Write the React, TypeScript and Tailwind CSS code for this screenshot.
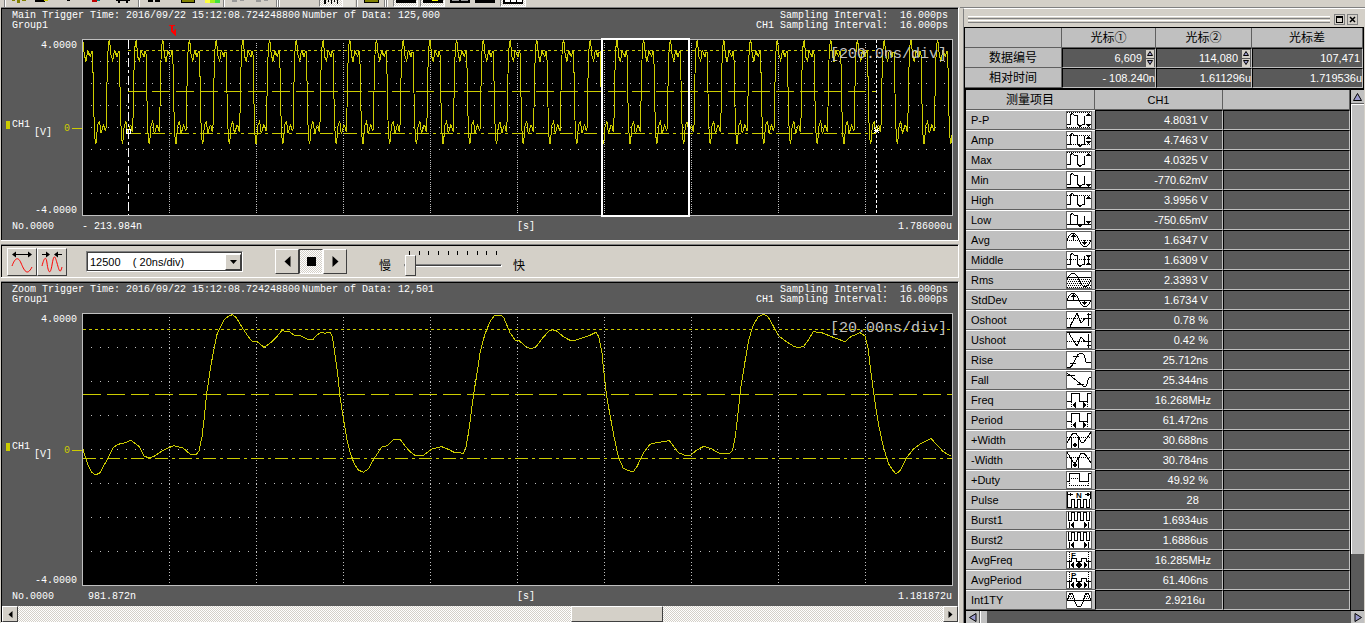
import React from 'react'

type Point = [number, number]

// Sampled trace, three units per pixel, zero volts at y = 448
const SAMPLES: Point[] = [
  [249, 448], [262, 490], [275, 517], [287, 525], [300, 518], [318, 485], [340, 442], [355, 433], [375, 428], [392, 421],
  [405, 430], [418, 440], [432, 468], [445, 473], [460, 470], [490, 451], [520, 437], [548, 443], [570, 462], [588, 464],
  [597, 452], [606, 410], [612, 360], [620, 280], [632, 200], [644, 135], [652, 100], [662, 80], [672, 60], [685, 49],
  [697, 44], [708, 52], [725, 80], [740, 103], [755, 123], [772, 125], [792, 142], [810, 130], [830, 110], [845, 92],
  [868, 95], [885, 108], [902, 107], [920, 117], [940, 117], [950, 106], [962, 97], [975, 100], [990, 97], [997, 110],
  [1006, 170], [1014, 230], [1020, 290], [1030, 355], [1040, 415], [1050, 455], [1062, 490], [1075, 510], [1090, 517],
  [1105, 507], [1120, 480], [1145, 441], [1162, 437], [1180, 420], [1200, 418], [1215, 437], [1228, 453], [1245, 466],
  [1270, 466], [1295, 447], [1325, 440], [1345, 448], [1362, 457], [1378, 457], [1390, 461], [1398, 440], [1406, 395],
  [1414, 335], [1422, 275], [1432, 215], [1440, 160], [1447, 130], [1456, 100], [1470, 65], [1482, 48], [1490, 45],
  [1503, 45], [1512, 55], [1530, 98], [1545, 120], [1558, 122], [1575, 138], [1592, 147], [1608, 140], [1630, 112],
  [1648, 92], [1658, 89], [1672, 94], [1690, 110], [1710, 121], [1728, 120], [1745, 114], [1770, 106], [1788, 97],
  [1796, 110], [1806, 160], [1812, 220], [1820, 290], [1830, 345], [1842, 410], [1855, 470], [1870, 505], [1885, 512],
  [1900, 515], [1912, 498], [1930, 460], [1950, 433], [1970, 428], [1990, 425], [2008, 422], [2022, 440], [2035, 458],
  [2055, 466], [2072, 466], [2090, 450], [2112, 439], [2135, 447], [2158, 460], [2190, 460], [2198, 450], [2206, 410],
  [2214, 340], [2222, 265], [2234, 190], [2246, 120], [2260, 75], [2275, 50], [2290, 43], [2304, 50], [2318, 75],
  [2335, 107], [2355, 122], [2380, 138], [2395, 143], [2412, 138], [2425, 120], [2440, 95], [2465, 98], [2495, 110],
  [2535, 125], [2552, 110], [2580, 98], [2595, 108], [2604, 145], [2614, 225], [2624, 300], [2635, 370], [2650, 440],
  [2665, 490], [2678, 510], [2688, 522], [2702, 510], [2722, 470], [2740, 448], [2760, 432], [2775, 425], [2793, 415],
  [2808, 432], [2830, 455], [2852, 468],
]

const toPath = (points: Point[]) => 'M' + points.map(([x, y]) => `${x.toFixed(1)} ${y.toFixed(1)}`).join('L')

const zoomPath = toPath(SAMPLES.map(([x, y]) => [(x - 246) / 3, (y - 39) / 3]))

// One burst period repeated over the whole record
const PERIOD = SAMPLES.slice(3, 58)
const mainPath = toPath(
  Array.from({ length: 34 }, (_, i) => i - 20)
    .flatMap((n) => PERIOD.map(([x, y]): Point => [520 + (x - 246) / 30 + n * 26.72, 88.5 + (y - 448) * 0.2157]))
    .filter(([x]) => x > 0 && x < 870),
)

const GRID = [1, 2, 3, 4, 5, 6, 7, 8, 9]

interface PlotProps {
  height: number
  pitch: number
  path: string
  high: number
  middle: number
  low: number
  from?: number
  to?: number
  children?: React.ReactNode
}

const Plot: React.FC<PlotProps> = ({ height, pitch, path, high, middle, low, from = 1, to = 870, children }) => (
  <svg
    viewBox={`0 0 871 ${height}`}
    preserveAspectRatio="none"
    className="block w-full overflow-visible bg-black"
    height={height}
    fill="none"
    shapeRendering="crispEdges"
  >
    <g stroke="#c0c0c0">
      {GRID.map((n) => (
        <path key={n} d={`M${n * 87 + 0.5} 4V${height - 1}`} strokeDasharray={`1 ${pitch - 1}`} />
      ))}
      {[1, 2, 3, 4, 5, 6, 7].map((n) => (
        <path
          key={n}
          d={`M9 ${Math.round((n * (height - 1)) / 8) + 0.5}H866`}
          strokeDasharray="1 7.7"
        />
      ))}
    </g>
    <g stroke="#cccc00">
      <path d={`M${from} ${high}H${to}`} strokeDasharray="3 3" />
      <path d={`M${from} ${middle}H${to}`} strokeDasharray="18 6" />
      <path d={`M${from} ${low}H${to}`} strokeDasharray="13 4 3 4" />
      <path d={path} />
    </g>
    <path d={`M.5 .5H870.5V${height - 0.5}H.5Z`} stroke="#c0c0c0" />
    {children}
  </svg>
)

interface ScopePanelProps {
  title: string
  count: string
  scale: string
  start: string
  end: string
  mark?: React.ReactNode
  footer?: React.ReactNode
  children: React.ReactNode
}

const ScopePanel: React.FC<ScopePanelProps> = ({ title, count, scale, start, end, mark, footer, children }) => (
  <section className="border-t border-r border-b border-t-[#808080] border-r-white border-b-white">
    <div className="border-t border-l border-black bg-[#5a5a5a] font-['Liberation_Mono',monospace] text-[10px] leading-[10px] text-white">
      <header className="flex justify-between pt-[2px] pr-[10px] pb-2 pl-[10px] whitespace-pre">
        <div>
          <p>{title} Trigger Time: 2016/09/22 15:12:08.724248800 <span className="-ml-1">Number of Data: {count}</span></p>
          <p>Group1</p>
        </div>
        <div className="text-right">
          <p>Sampling Interval:  16.000ps</p>
          <p>CH1 Sampling Interval:  16.000ps</p>
        </div>
      </header>
      <div className="flex pr-[5px]">
        <div className="flex w-20 shrink-0 flex-col justify-between">
          <p className="pt-[2px] pr-[5px] text-right">4.0000</p>
          <div className="flex items-center pl-1">
            <span className="mr-[2px] mb-2 h-2 w-1 bg-[#cccc00]" />
            <span className="mb-2">CH1</span>
            <span className="mt-2 ml-[4px]">[V]</span>
            <span className="ml-3 text-[#cccc00]">0</span>
            <span className="ml-[2px] h-px flex-1 bg-[#cccc00]" />
          </div>
          <p className="pr-[5px] text-right">-4.0000</p>
        </div>
        <div className="relative min-w-0 flex-1">
          {children}
          {mark}
          <p className="absolute top-[8px] right-[6px] text-[15px] leading-4 text-[#c0c0c0]">{scale}</p>
        </div>
      </div>
      <div className="flex h-5 items-center pt-[2px] pr-[6px] pl-[10px] whitespace-pre">
        <span className="w-[70px]">No.0000</span>
        <div className="flex flex-1">
          <span className="w-1/2">{start}</span>
          <span>[s]</span>
          <span className="flex-1 text-right">{end}</span>
        </div>
      </div>
      {footer}
    </div>
  </section>
)

const raised = 'border border-t-white border-l-white border-r-[#404040] border-b-[#404040] bg-[#d4d0c8]'
const checker = 'bg-[conic-gradient(#fff_25%,#d4d0c8_0_50%,#fff_0_75%,#d4d0c8_0)] [background-size:2px_2px]'

const Arrow = ({ d }: { d: string }) => (
  <svg width="11" height="11" viewBox="0 0 11 11" className="block shrink-0">
    <path d={d} />
  </svg>
)

const TimeScrollbar = () => (
  <div className={`flex h-4 ${checker}`}>
    <button aria-label="Scroll left" className={`flex w-4 items-center justify-center ${raised}`}>
      <Arrow d="M7.500 2v7L3.500 5.500z" />
    </button>
    <div className="flex-[553]" />
    <div className={`w-[92px] ${raised}`} />
    <div className="flex-[280]" />
    <button aria-label="Scroll right" className={`flex w-[15px] items-center justify-center ${raised}`}>
      <Arrow d="M3.500 2v7L7.500 5.500z" />
    </button>
  </div>
)

const TOOLS: { w: string; kind?: 'sep' | 'pressed'; icon?: React.ReactNode }[] = [
  { w: 'ml-1 w-[2px]', kind: 'sep' },
  { w: 'w-[26px]', icon: <path d="M0 0h3v1h-3zM5 0h3v3h-3zM10 0h4v1h-4z" fill="#808000" /> },
  { w: 'w-[20px]', icon: <><path d="M0 0h10v2h-10z" /><path d="M9 0h4v1h-4z" fill="#cccc00" /></> },
  { w: 'w-[32px]', icon: <path d="M6 0h3v1h-3z" /> },
  { w: 'w-[24px]', icon: <><path d="M3 0h5v2h-5z" fill="#c00000" /><path d="M8 0h3v1h-3z" fill="#008080" /></> },
  { w: 'w-[30px]', icon: <path d="M0 0h14v1h-14zM2 1h2v2h-2zM10 1h2v2h-2z" /> },
  { w: 'w-[2px]', kind: 'sep' },
  { w: 'w-[28px]', icon: <path d="M1 0h5v2h-5zM8 0h5v2h-5z" /> },
  { w: 'ml-2 w-[24px]', icon: <path d="M.5 -2h13v4h-13z" fill="#808000" stroke="#000" /> },
  { w: 'w-[23px]', icon: <><path d="M0 0h5v3h-5z" fill="#ffff40" /><path d="M5 0h5v3h-5z" fill="#a0f020" /><path d="M10 0h5v3h-5z" fill="#40e040" /></> },
  { w: 'w-[2px]', kind: 'sep' },
  { w: 'w-[28px]', icon: <path d="M0 0h5v2h-5zM8 0h4v1h-4z" fill="#999" /> },
  { w: 'w-[20px]', icon: <path d="M0 0h5v2h-5zM8 0h4v1h-4z" fill="#999" /> },
  { w: 'ml-[3px] w-[2px]', kind: 'sep' },
  { w: 'w-[2px]', kind: 'sep' },
  { w: 'ml-[39px] w-[24px]', kind: 'pressed', icon: <path d="M0 0h2v4h-2zM4 0h1v2h-1zM7 0h1v4h-1zM10 0h1v2h-1zM13 0h1v4h-1z" /> },
  { w: 'w-[12px] bg-[#e4e2dc]' },
  { w: 'ml-[1px] w-[2px]', kind: 'sep' },
  { w: 'w-[26px]', icon: <path d="M.5 -2h14v4h-14z" fill="#808000" stroke="#000" /> },
  { w: 'w-[2px]', kind: 'sep' },
  { w: 'w-[2px]', kind: 'sep' },
  { w: 'ml-[5px] w-[25px]', kind: 'pressed', icon: <path d="M-3 0h20v3h-20z" /> },
  { w: 'ml-[2px] w-[25px]', kind: 'pressed', icon: <><path d="M-3 0h20v3h-20z" /><path d="M6 0h6v1h-6z" fill="#ff0" /></> },
  { w: 'ml-[2px] w-[25px]', icon: <><path d="M-3 0h20v3h-20z" /><path d="M-1 0h7v1h-7zM8 0h7v1h-7z" fill="#999" /></> },
  { w: 'w-[26px]', icon: <path d="M-3 0h20v3h-20z" /> },
  { w: 'ml-[2px] w-[26px]', kind: 'pressed', icon: <><path d="M-3 0h20v4h-20z" /><path d="M-1 0h5v2h-5zM5 0h5v2h-5zM11 0h5v2h-5z" fill="#fff" /></> },
]

const Toolbar = () => (
  <div className="flex h-[7px] overflow-hidden">
    {TOOLS.map(({ w, kind, icon }, i) =>
      kind === 'sep' ? (
        <span key={i} className={`shrink-0 border-l border-[#808080] bg-white ${w}`} />
      ) : (
        <button
          key={i}
          aria-label={`Tool ${i}`}
          className={`flex shrink-0 justify-center ${w} ${kind === 'pressed' ? `border-r border-b border-l border-l-[#808080] border-r-white border-b-white ${checker}` : ''}`}
        >
          <svg width="14" height="5" viewBox="0 0 14 5" className="block shrink-0 overflow-visible" shapeRendering="crispEdges">
            {icon}
          </svg>
        </button>
      ),
    )}
  </div>
)

const ControlBar = () => (
  <section className="my-[3px] border-t border-r border-b border-t-[#808080] border-r-white border-b-white">
    <div className="flex h-8 items-center border-t border-l border-black pl-[5px] font-['Liberation_Sans','Noto_Sans_CJK_SC',sans-serif] text-[11px]">
      <button aria-label="Zoom in" className={`flex h-7 w-[30px] items-center justify-center ${raised}`}>
        <svg width="24" height="24" viewBox="0 0 24 24" fill="none">
          <path d="M3 4.500h18" stroke="#000" />
          <path d="M2 4.500l4-3v6zM22 4.500l-4-3v6z" fill="#000" />
          <path d="M2 16C5 8 8 6 11 13S17 27 22 17" stroke="#f00" />
        </svg>
      </button>
      <button aria-label="Zoom out" className={`flex h-7 w-[30px] items-center justify-center ${raised}`}>
        <svg width="24" height="24" viewBox="0 0 24 24" fill="none">
          <path d="M2 4.500h5M17 4.500h5" stroke="#000" />
          <path d="M10 4.500l-4-3v6zM14 4.500l4-3v6z" fill="#000" />
          <path d="M2 16C4 8 6 5 7 13S10 27 12 15 15 6 17 13 20 25 22 17" stroke="#f00" />
        </svg>
      </button>
      <div className="relative ml-[19px] h-[21px] w-[157px] border border-t-[#808080] border-r-white border-b-white border-l-[#808080]">
        <select
          aria-label="Zoom width"
          className="block h-full w-full appearance-none border border-[#404040] bg-white pl-[2px] leading-4 text-black"
        >
          <option>{'12500\u00a0\u00a0\u00a0\u00a0( 20ns/div)'}</option>
        </select>
        <span className={`pointer-events-none absolute top-[2px] right-[1px] flex h-4 w-4 items-center justify-center ${raised}`}>
          <svg width="7" height="4" viewBox="0 0 7 4"><path d="M0 0h7L3.500 4z" /></svg>
        </span>
      </div>
      <div className="ml-8 flex h-[25px]">
        <button aria-label="Step back" className={`flex w-6 items-center justify-center ${raised}`}>
          <Arrow d="M8.500 0v11L2.500 5.500z" />
        </button>
        <button aria-label="Stop" className={`flex w-6 items-center justify-center border border-t-[#404040] border-r-white border-b-white border-l-[#404040] ${checker}`}>
          <Arrow d="M1 1h9v9H1z" />
        </button>
        <button aria-label="Step forward" className={`flex w-6 items-center justify-center ${raised}`}>
          <Arrow d="M2.500 0v11L8.500 5.500z" />
        </button>
      </div>
      <label htmlFor="speed" className="mt-2 ml-8 text-xs leading-4 text-black">慢</label>
      <div className="mt-[3px] ml-[13px] w-[98px]">
        <div className="mx-[5px] flex justify-between">
          {Array.from({ length: 10 }, (_, i) => (
            <span key={i} className="h-1 w-px bg-black" />
          ))}
        </div>
        <input
          id="speed"
          type="range"
          min={0}
          max={9}
          defaultValue={0}
          className="block h-[21px] w-full appearance-none bg-transparent [&::-webkit-slider-runnable-track]:h-[3px] [&::-webkit-slider-runnable-track]:border [&::-webkit-slider-runnable-track]:border-t-[#808080] [&::-webkit-slider-runnable-track]:border-b-white [&::-webkit-slider-runnable-track]:border-l-[#808080] [&::-webkit-slider-runnable-track]:border-r-white [&::-webkit-slider-runnable-track]:bg-[#404040] [&::-webkit-slider-thumb]:-mt-[10px] [&::-webkit-slider-thumb]:h-[21px] [&::-webkit-slider-thumb]:w-[11px] [&::-webkit-slider-thumb]:appearance-none [&::-webkit-slider-thumb]:border [&::-webkit-slider-thumb]:border-t-white [&::-webkit-slider-thumb]:border-l-white [&::-webkit-slider-thumb]:border-r-[#404040] [&::-webkit-slider-thumb]:border-b-[#404040] [&::-webkit-slider-thumb]:bg-[#d4d0c8]"
        />
      </div>
      <span className="mt-2 ml-[11px] text-xs leading-4 text-black">快</span>
    </div>
  </section>
)

interface IconShape {
  d?: string
  dots?: string
  fill?: string
  text?: string
}

const PULSE = 'M0 12.500H3.500V3L5 1.500L8 3.500H10.500V12L13 14.500L15.500 12.500H17.500V4'
const SINE = 'M0 8Q6 -6 12 8T24 8'
const SQUARE = 'M0 9.500H4.500V1.500H12.500V9.500H20.500V1.500H24'
const COMB = 'M1.500 0V8.500H4.500V.5H7.500V8.500H10.500V.5H13.500V8.500H16.500V.5H19.500V8.500H22.500V0'
const SPAN = 'M3 13l4-3v6zM21 13l-4-3v6z'
const ENDS = 'M2.500 10V16M21.500 10V16'

const MEASURES: { name: string; value: string; icon: IconShape }[] = [
  { name: 'P-P', value: '4.8031 V ', icon: { d: PULSE, dots: 'M0 .5H24M0 15.500H24', fill: 'M21.500 1l2.500 3h-5zM21.500 15l2.500-3h-5z' } },
  { name: 'Amp', value: '4.7463 V ', icon: { d: PULSE, dots: 'M0 3.500H24M0 12.500H24', fill: 'M21.500 4l2.500 3h-5zM21.500 12l2.500-3h-5z' } },
  { name: 'Max', value: '4.0325 V ', icon: { d: PULSE, dots: 'M0 .5H24', fill: 'M21.500 1l2.500 3h-5z' } },
  { name: 'Min', value: '-770.62mV ', icon: { d: PULSE + 'M0 15.500H24', fill: 'M21.500 15l2.500-3h-5z' } },
  { name: 'High', value: '3.9956 V ', icon: { d: PULSE, dots: 'M0 3.500H24', fill: 'M21.500 4l2.500 3h-5z' } },
  { name: 'Low', value: '-750.65mV ', icon: { d: PULSE + 'M0 12.500H24', fill: 'M21.500 12l2.500-3h-5z' } },
  { name: 'Avg', value: '1.6347 V ', icon: { d: SINE + 'M6.500 4V8M17.500 8V12', dots: 'M0 8.500H24', fill: 'M6.500 2l3 3h-6zM17.500 13l3-3h-6z' } },
  { name: 'Middle', value: '1.6309 V ', icon: { d: PULSE + 'M19 3.500H24M21.500 3V13M19 12.500H24', dots: 'M0 7.500H24', fill: 'M21.500 6l2-2h-4zM21.500 10l2 2h-4z' } },
  { name: 'Rms', value: '2.3393 V ', icon: { d: SINE + 'M0 5.500H24', dots: 'M0 7.500H24M1 9.500H24M0 11.500H24M1 13.500H24M0 15.500H24' } },
  { name: 'StdDev', value: '1.6734 V ', icon: { d: SINE + 'M0 8.500H24M6.500 4V8M17.500 8V12', fill: 'M6.500 2l3 3h-6zM17.500 13l3-3h-6z' } },
  { name: 'Oshoot', value: '0.78 % ', icon: { d: 'M3 14.500L10 1L14 11L18 6.500H20M21.500 1V14M20 2.500H24M20 6.500H24M0 15.500H24', dots: 'M0 6.500H24' } },
  { name: 'Ushoot', value: '0.42 % ', icon: { d: 'M2 1.500L10 14L14 5L18 9.500H20M21.500 2V16M20 9.500H24M20 13.500H24M0 .5H24', dots: 'M0 9.500H24' } },
  { name: 'Rise', value: '25.712ns ', icon: { d: 'M0 15.500H3C9 12 8 1 14 1S17 11 20 10.500H24M3 11.500H9M6 4.500H12' } },
  { name: 'Fall', value: '25.344ns ', icon: { d: 'M0 1L15 13Q18 17 20 12Q21 5 24 5M0 3.500H8M10 12.500H17' } },
  { name: 'Freq', value: '16.268MHz', icon: { d: SQUARE, dots: 'M4.500 10V16M20.500 10V16', fill: 'M5 13l4-3v6zM20 13l-4-3v6z' } },
  { name: 'Period', value: '61.472ns ', icon: { d: SQUARE, dots: 'M4.500 10V16M20.500 10V16', fill: 'M5 13l4-3v6zM20 13l-4-3v6z' } },
  { name: '+Width', value: '30.688ns ', icon: { d: 'M0 11L3 6L6 1H9L12 6L14 10H17L20 6L24 0M4.500 5V16M11.500 5V16', dots: 'M0 5.500H24', fill: 'M5 13l3-2v4zM11 13l-3-2v4z' } },
  { name: '-Width', value: '30.784ns ', icon: { d: 'M0 0L3 5L6 10H9L12 5L14 1H17L20 5L24 11M4.500 5V16M11.500 5V16', dots: 'M0 5.500H24', fill: 'M5 13l3-2v4zM11 13l-3-2v4z' } },
  { name: '+Duty', value: '49.92 % ', icon: { d: 'M0 9.500H2.500V1.500H12.500V9.500H21.500V1.500H24', dots: 'M2 6.500H12M2 13.500H22M2.500 11V15M21.500 11V15' } },
  { name: 'Pulse', value: '28    ', icon: { d: 'M0 15.500H4.500V7.500H7.500V15.500H10.500V7.500H13.500V15.500H16.500V7.500H19.500V15.500H22.500V7M.5 0V15M1 2.500H6M18 2.500H23M23.500 0V7', fill: 'M1 2.500l3-2v4zM23 2.500l-3-2v4z', text: 'N' } },
  { name: 'Burst1', value: '1.6934us ', icon: { d: COMB + ENDS, fill: SPAN } },
  { name: 'Burst2', value: '1.6886us ', icon: { d: COMB + ENDS, fill: SPAN } },
  { name: 'AvgFreq', value: '16.285MHz', icon: { d: 'M0 9.500H4.500V6.500H9.500V9.500H14.500V6.500H19.500V9.500H24' + ENDS, dots: 'M2.500 0V9M21.500 0V9', fill: SPAN + 'M8 13l4-3v6zM16 13l-4-3v6z', text: 'F' } },
  { name: 'AvgPeriod', value: '61.406ns ', icon: { d: 'M0 9.500H4.500V6.500H9.500V9.500H14.500V6.500H19.500V9.500H24' + ENDS, dots: 'M2.500 0V9M21.500 0V9', fill: SPAN + 'M8 13l4-3v6zM16 13l-4-3v6z', text: 'P' } },
  { name: 'Int1TY', value: '2.9216u  ', icon: { d: 'M0 8.500H24M7 8L10 14H14L17 8M0 8L3 1H5L8 8M16 8L19 1H21L24 8', dots: 'M3 2.500H6M2 4.500H7M1 6.500H8M19 2.500H22M18 4.500H23M17 6.500H24' } },
]

const MeasureIcon = ({ d, dots, fill, text }: IconShape) => (
  <svg
    width="26"
    height="18"
    viewBox="0 0 24 16"
    className="mr-[3px] block shrink-0 border border-[#606060] bg-white"
    fill="none"
    stroke="#000"
    shapeRendering="crispEdges"
  >
    <path d={d} />
    <path d={dots} strokeDasharray="1 1" />
    <path d={fill} fill="#000" stroke="none" />
    {text && (
      <text x={text === 'N' ? 9 : 4} y="6" fill="#000" stroke="none" fontSize="8" fontWeight="bold" fontFamily="Liberation Sans">
        {text}
      </text>
    )}
  </svg>
)

const headCell = 'h-5 border-r border-b border-r-[#606060] border-b-[#606060] bg-[#c0c0c0] p-0 font-normal text-black'
const dataCell = 'h-5 border border-t-black border-l-black border-r-[#c0c0c0] border-b-[#c0c0c0] bg-[#5a5a5a] p-0 text-right text-white'

const Spinner = ({ label, value }: { label: string; value: string }) => (
  <div className="flex items-center pr-px">
    <input aria-label={label} defaultValue={value} className="block min-w-0 flex-1 bg-transparent pr-[4px] text-right leading-4 outline-none" />
    <div className="flex flex-col gap-px">
      <button aria-label={`${label} +`} className="flex h-2 w-2 items-center justify-center bg-[#d4d0c8]">
        <svg width="6" height="5" viewBox="0 0 6 5"><path d="M3 .5L5.500 4.500h-5z" fill="#9999cc" stroke="#000" /></svg>
      </button>
      <button aria-label={`${label} -`} className="flex h-2 w-2 items-center justify-center bg-[#d4d0c8]">
        <svg width="6" height="5" viewBox="0 0 6 5"><path d="M3 4.500L5.500 .5h-5z" fill="#9999cc" stroke="#000" /></svg>
      </button>
    </div>
  </div>
)

const CursorTable = () => (
  <table className="w-full table-fixed border-separate border-spacing-0 border border-b-2 border-black leading-4">
    <thead className="text-xs leading-4">
      <tr>
        <th className={`w-[97px] ${headCell}`} />
        <th className={`w-[94px] ${headCell}`}>光标①</th>
        <th className={`w-[96px] ${headCell}`}>光标②</th>
        <th className={headCell}>光标差</th>
      </tr>
    </thead>
    <tbody>
      <tr>
        <th scope="row" className={`text-xs leading-4 ${headCell}`}>数据编号</th>
        <td className={dataCell}><Spinner label="光标①" value="6,609" /></td>
        <td className={dataCell}><Spinner label="光标②" value="114,080" /></td>
        <td className={`${dataCell} pr-[2px]`}>107,471</td>
      </tr>
      <tr>
        <th scope="row" className={`text-xs leading-4 ${headCell}`}>相对时间</th>
        <td className={dataCell}>- 108.240n</td>
        <td className={dataCell}>1.611296u</td>
        <td className={dataCell}>1.719536u</td>
      </tr>
    </tbody>
  </table>
)

const MeasureTable = () => (
  <div className="flex border-l-2 border-black">
    <table className="min-w-0 flex-1 table-fixed border-separate border-spacing-0 leading-4">
      <thead>
        <tr>
          <th className={`w-[129px] text-xs leading-4 ${headCell}`}>测量项目</th>
          <th className={`w-[128px] ${headCell}`}>CH1</th>
          <th className={headCell} />
        </tr>
      </thead>
      <tbody>
        {MEASURES.map(({ name, value, icon }) => (
          <tr key={name}>
            <th scope="row" className="h-5 border-t border-b border-t-white border-b-[#606060] bg-[#c0c0c0] p-0 text-left font-normal text-black">
              <div className="flex h-[18px] items-center justify-between pl-[5px]">
                {name}
                <MeasureIcon {...icon} />
              </div>
            </th>
            <td className={`${dataCell} pr-[11px] whitespace-pre`}>{value}</td>
            <td className={dataCell} />
          </tr>
        ))}
      </tbody>
    </table>
    <div className="flex w-[14px] flex-col border-l border-black bg-[#5a5a5a]">
      <button aria-label="Scroll up" className="flex h-[14px] items-center justify-center border-b border-[#606060] bg-[#c0c0c0]">
        <svg width="9" height="8" viewBox="0 0 9 8"><path d="M4.500 .5L8.500 7.500h-8z" fill="#9999cc" stroke="#000" /></svg>
      </button>
      <div className="flex-[449] border-t border-l border-white bg-[#c0c0c0]" />
      <div className="flex-[56]" />
    </div>
  </div>
)

const MeasurePanel = () => (
  <aside className="w-[405px] shrink-0 border-t border-[#808080] pl-[3px]">
    <div className="border-t border-l border-t-white border-l-[#808080] pr-px font-['Liberation_Sans','Noto_Sans_CJK_SC',sans-serif] text-[11px]">
      <div className="flex h-[18px] items-center gap-[2px] pt-[3px] pr-[6px] pl-1">
        <div className="mr-[2px] flex flex-1 flex-col gap-px">
          <span className="h-[3px] border-t border-b border-t-white border-b-[#808080]" />
          <span className="h-[3px] border-t border-b border-t-white border-b-[#808080]" />
        </div>
        <button aria-label="Maximize" className="flex h-[11px] w-[11px] items-center justify-center border border-[#808080]">
          <svg width="7" height="7" viewBox="0 0 7 7" shapeRendering="crispEdges"><path d="M0 0h7v7H0zM1 2v4h5V2z" fillRule="evenodd" /></svg>
        </button>
        <button aria-label="Close" className="flex h-[11px] w-[11px] items-center justify-center border border-[#808080]">
          <svg width="7" height="7" viewBox="0 0 7 7"><path d="M1 1l5 5M6 1l-5 5" stroke="#000" strokeWidth="1.500" /></svg>
        </button>
      </div>
      <CursorTable />
      <MeasureTable />
      <div className="flex h-[13px] border-t border-l-2 border-black bg-[#5a5a5a]">
        <button aria-label="Scroll left" className="flex w-[13px] items-center justify-center bg-[#c0c0c0]">
          <svg width="8" height="9" viewBox="0 0 8 9"><path d="M.5 4.500L7 .5v8z" fill="#9999cc" stroke="#000" /></svg>
        </button>
        <div className="ml-px w-[7px] border-l border-white bg-[#c0c0c0]" />
        <div className="flex-1" />
        <button aria-label="Scroll right" className="flex w-[13px] items-center justify-center bg-[#c0c0c0]">
          <svg width="8" height="9" viewBox="0 0 8 9"><path d="M7.500 4.500L1 .5v8z" fill="#9999cc" stroke="#000" /></svg>
        </button>
      </div>
    </div>
  </aside>
)

export default function App() {
  return (
    <div className="min-h-screen bg-[#d4d0c8]">
      <Toolbar />
      <div className="flex">
        <main className="mr-px min-w-0 flex-1 pl-px">
          <ScopePanel
            title="Main"
            count="125,000"
            scale="[200.0ns/div]"
            start="- 213.984n"
            end="1.786000u"
            footer={<div className="h-1" />}
            mark={
              <svg width="7" height="12" viewBox="0 0 7 12" className="absolute -top-[14px] left-[87px]" fill="red" shapeRendering="crispEdges">
                <path d="M0 0h6v1h-2v5h-2V1h-2zM7 3v8L1 6h3z" />
              </svg>
            }
          >
            <Plot height={177} pitch={2.2} path={mainPath} high={11.5} middle={52.5} low={94.5} from={46} to={794}>
              <path d="M46.500 1V176" stroke="#fff" strokeDasharray="9 3 3 3" />
              <path d="M794.500 1V176" stroke="#fff" strokeDasharray="3 2" />
              <path d="M44.500 90.500h4v4h-4z" stroke="#fff" />
              <path d="M792 89l5 5M797 89l-5 5M792 91.500h5" stroke="#fff" />
              <path d="M520 0H607V177H520Z" stroke="#fff" strokeWidth="2" />
            </Plot>
          </ScopePanel>
          <ControlBar />
          <ScopePanel
            title="Zoom"
            count="12,501"
            scale="[20.00ns/div]"
            start=" 981.872n"
            end="1.181872u"
            footer={<TimeScrollbar />}
          >
            <Plot height={273} pitch={3.4} path={zoomPath} high={16.5} middle={81.5} low={145.5} />
          </ScopePanel>
        </main>
        <MeasurePanel />
      </div>
    </div>
  )
}
